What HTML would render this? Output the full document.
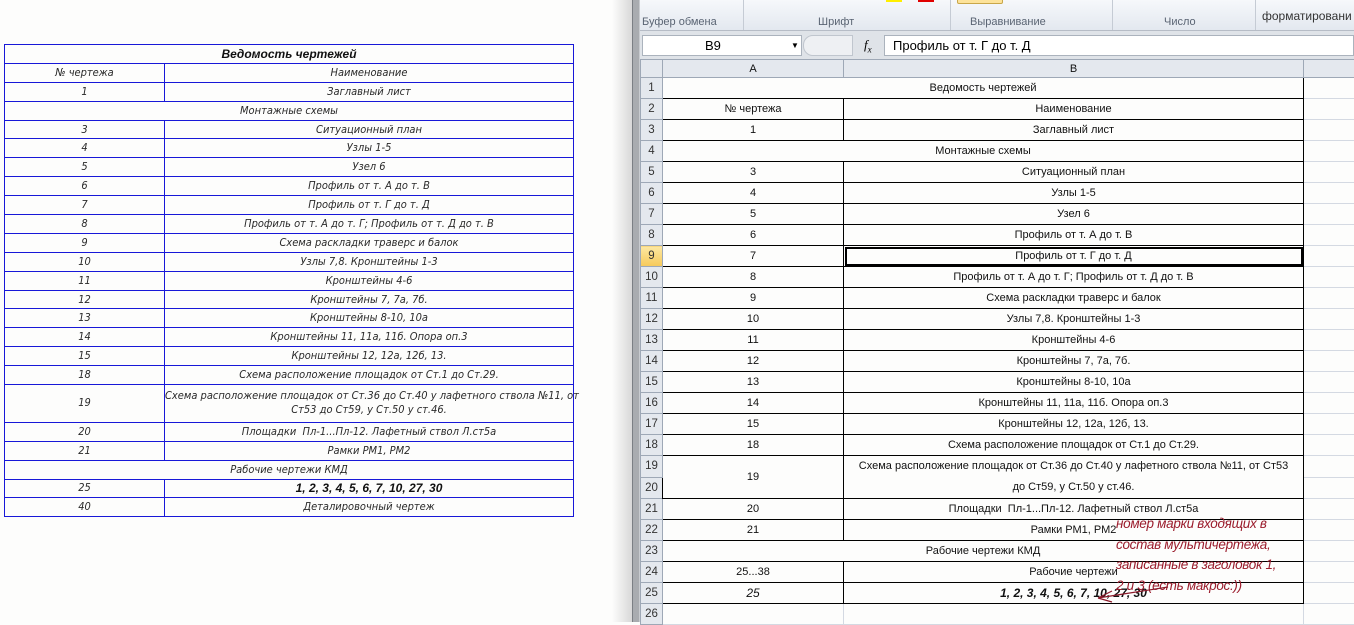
<!DOCTYPE html>
<html><head><meta charset="utf-8">
<style>
*{margin:0;padding:0;box-sizing:border-box}
body{width:1354px;height:622px;overflow:hidden;background:#fdfdfc;position:relative;font-family:"Liberation Sans",sans-serif}
.lt{position:absolute;left:4px;top:44px;width:569px;border-collapse:collapse;table-layout:fixed;font-family:"Liberation Sans Narrow","DejaVu Sans Condensed","Liberation Sans",sans-serif;font-style:italic;font-size:11px;color:#2a2a2a}
.lt td{border:1px solid #1818d8;height:18.9px;text-align:center;padding:0;line-height:12px;white-space:nowrap;overflow:visible}
.lt td.b{font-family:"Liberation Sans",sans-serif;font-weight:bold;font-size:12px;color:#111}
.shadow{position:absolute;left:612px;top:0;width:20px;height:622px;background:linear-gradient(to right,#fdfdfc,#d8d8d8)}
.frame{position:absolute;left:632px;top:0;width:8px;height:622px;background:#a9acb0;border-left:1px solid #7b7f84;border-right:1px solid #c8cbcf}
.rib{position:absolute;left:640px;top:0;width:714px;height:31px;background:linear-gradient(#f6f8fb,#e3e8ef);border-bottom:1px solid #b6bcc6;font-size:11px;color:#5a6473}
.rib span{position:absolute;top:16px}
.rib .sep{position:absolute;top:0;width:1px;height:30px;background:#c5cbd4}
.fb{position:absolute;left:640px;top:31px;width:714px;height:28px;background:#dfe3e8}
.nb{position:absolute;left:2px;top:4px;width:160px;height:21px;background:#fff;border:1px solid #abb3bd;font-size:13px;padding-left:62px;line-height:19px}
.fx{position:absolute;left:244px;top:4px;width:470px;height:21px;background:#fff;border:1px solid #abb3bd;font-size:13px;padding-left:8px;line-height:19px}
.grid{position:absolute;left:640px;top:59px}
.xt{width:714px;border-collapse:collapse;table-layout:fixed;font-size:11px;color:#111}
.xt td{height:21px;border:1px solid #d4d9e2;text-align:center;padding:0;white-space:nowrap;overflow:visible}
.xt td.h{background:#e4e8ee;color:#333;font-size:11.5px;border-color:#9ea8b6}
.xt tr.hd td{height:18px;background:#e4e8ee;border-color:#9ea8b6}
.xt td.k{border:1px solid #000}
.xt td.sel{background:linear-gradient(#fde8a2,#f6c95a);}
.note{position:absolute;left:1116px;top:514px;color:#9b1c2c;font-style:italic;font-size:13.5px;line-height:20.5px;width:190px;letter-spacing:-0.3px;white-space:nowrap}
</style></head><body>
<table class="lt">
<col style="width:160px"><col style="width:409px">
<tr><td colspan="2" class="b" style="font-style:italic">Ведомость чертежей</td></tr>
<tr><td>№ чертежа</td><td>Наименование</td></tr>
<tr><td>1</td><td>Заглавный лист</td></tr>
<tr><td colspan="2">Монтажные схемы</td></tr>
<tr><td>3</td><td>Ситуационный план</td></tr>
<tr><td>4</td><td>Узлы 1-5</td></tr>
<tr><td>5</td><td>Узел 6</td></tr>
<tr><td>6</td><td>Профиль от т. А до т. В</td></tr>
<tr><td>7</td><td>Профиль от т. Г до т. Д</td></tr>
<tr><td>8</td><td>Профиль от т. А до т. Г; Профиль от т. Д до т. В</td></tr>
<tr><td>9</td><td>Схема раскладки траверс и балок</td></tr>
<tr><td>10</td><td>Узлы 7,8. Кронштейны 1-3</td></tr>
<tr><td>11</td><td>Кронштейны 4-6</td></tr>
<tr><td>12</td><td>Кронштейны 7, 7а, 7б.</td></tr>
<tr><td>13</td><td>Кронштейны 8-10, 10а</td></tr>
<tr><td>14</td><td>Кронштейны 11, 11а, 11б. Опора оп.3</td></tr>
<tr><td>15</td><td>Кронштейны 12, 12а, 12б, 13.</td></tr>
<tr><td>18</td><td>Схема расположение площадок от Ст.1 до Ст.29.</td></tr>
<tr><td style="height:37.8px">19</td><td style="line-height:14px">Схема расположение площадок от Ст.36 до Ст.40 у лафетного ствола №11, от<br>Ст53 до Ст59, у Ст.50 у ст.46.</td></tr>
<tr><td>20</td><td>Площадки&nbsp; Пл-1...Пл-12. Лафетный ствол Л.ст5а</td></tr>
<tr><td>21</td><td>Рамки РМ1, РМ2</td></tr>
<tr><td colspan="2">Рабочие чертежи КМД</td></tr>
<tr><td>25</td><td class="b">1, 2, 3, 4, 5, 6, 7, 10, 27, 30</td></tr>
<tr><td>40</td><td>Деталировочный чертеж</td></tr>
</table>

<div class="shadow"></div>
<div class="frame"></div>
<div class="rib">
<span style="left:2px">Буфер обмена</span><div class="sep" style="left:103px"></div>
<span style="left:178px">Шрифт</span><div class="sep" style="left:310px"></div>
<span style="left:246px;top:-6px;width:16px;height:8px;background:#ffef00"></span>
<span style="left:278px;top:-6px;width:16px;height:8px;background:#e00000"></span>
<span style="left:317px;top:-6px;width:46px;height:10px;background:#fde39a;border:1px solid #c9a74a;border-radius:2px"></span>
<span style="left:330px">Выравнивание</span><div class="sep" style="left:472px"></div>
<span style="left:524px">Число</span><div class="sep" style="left:615px"></div>
<span style="left:622px;top:9px;color:#333;font-size:12px">форматировани</span>
</div>
<div class="fb">
<div class="nb">B9<span style="position:absolute;left:148px;top:0;font-size:8px">▼</span></div>
<div style="position:absolute;left:163px;top:4px;width:50px;height:21px;background:#eef0f3;border:1px solid #c0c6ce;border-radius:10px 0 0 10px"></div>
<div style="position:absolute;left:224px;top:6px;font-family:'Liberation Serif',serif;font-style:italic;font-size:13px">f<sub style="font-size:9px">x</sub></div>
<div class="fx">Профиль от т. Г до т. Д</div>
</div>

<div class="grid">
<table class="xt">
<col style="width:22px"><col style="width:181px"><col style="width:460px"><col style="width:51px">
<tr class="hd"><td></td><td>A</td><td class="sel">B</td><td></td></tr>
<tr><td class="h">1</td><td colspan="2" class="k">Ведомость чертежей</td><td></td></tr>
<tr><td class="h">2</td><td class="k">№ чертежа</td><td class="k">Наименование</td><td></td></tr>
<tr><td class="h">3</td><td class="k">1</td><td class="k">Заглавный лист</td><td></td></tr>
<tr><td class="h">4</td><td colspan="2" class="k">Монтажные схемы</td><td></td></tr>
<tr><td class="h">5</td><td class="k">3</td><td class="k">Ситуационный план</td><td></td></tr>
<tr><td class="h">6</td><td class="k">4</td><td class="k">Узлы 1-5</td><td></td></tr>
<tr><td class="h">7</td><td class="k">5</td><td class="k">Узел 6</td><td></td></tr>
<tr><td class="h">8</td><td class="k">6</td><td class="k">Профиль от т. А до т. В</td><td></td></tr>
<tr><td class="h sel">9</td><td class="k">7</td><td class="k" style="outline:2px solid #000;outline-offset:-3px">Профиль от т. Г до т. Д</td><td></td></tr>
<tr><td class="h">10</td><td class="k">8</td><td class="k">Профиль от т. А до т. Г; Профиль от т. Д до т. В</td><td></td></tr>
<tr><td class="h">11</td><td class="k">9</td><td class="k">Схема раскладки траверс и балок</td><td></td></tr>
<tr><td class="h">12</td><td class="k">10</td><td class="k">Узлы 7,8. Кронштейны 1-3</td><td></td></tr>
<tr><td class="h">13</td><td class="k">11</td><td class="k">Кронштейны 4-6</td><td></td></tr>
<tr><td class="h">14</td><td class="k">12</td><td class="k">Кронштейны 7, 7а, 7б.</td><td></td></tr>
<tr><td class="h">15</td><td class="k">13</td><td class="k">Кронштейны 8-10, 10а</td><td></td></tr>
<tr><td class="h">16</td><td class="k">14</td><td class="k">Кронштейны 11, 11а, 11б. Опора оп.3</td><td></td></tr>
<tr><td class="h">17</td><td class="k">15</td><td class="k">Кронштейны 12, 12а, 12б, 13.</td><td></td></tr>
<tr><td class="h">18</td><td class="k">18</td><td class="k">Схема расположение площадок от Ст.1 до Ст.29.</td><td></td></tr>
<tr><td class="h">19</td><td class="k" rowspan="2">19</td><td class="k" rowspan="2" style="line-height:21px">Схема расположение площадок от Ст.36 до Ст.40 у лафетного ствола №11, от Ст53<br>до Ст59, у Ст.50 у ст.46.</td><td></td></tr>
<tr><td class="h">20</td><td></td></tr>
<tr><td class="h">21</td><td class="k">20</td><td class="k">Площадки&nbsp; Пл-1...Пл-12. Лафетный ствол Л.ст5а</td><td></td></tr>
<tr><td class="h">22</td><td class="k">21</td><td class="k">Рамки РМ1, РМ2</td><td></td></tr>
<tr><td class="h">23</td><td colspan="2" class="k">Рабочие чертежи КМД</td><td></td></tr>
<tr><td class="h">24</td><td class="k">25...38</td><td class="k">Рабочие чертежи</td><td></td></tr>
<tr><td class="h">25</td><td class="k" style="font-style:italic;font-size:12px">25</td><td class="k" style="font-style:italic;font-weight:bold;font-size:12px">1, 2, 3, 4, 5, 6, 7, 10, 27, 30</td><td></td></tr>
<tr><td class="h">26</td><td></td><td></td><td></td></tr>
</table>
</div>
<div class="note">номер марки входящих в<br>состав мультичертежа,<br>записанные в заголовок 1,<br>2 и 3 (есть макрос:))</div>
<svg style="position:absolute;left:1090px;top:582px" width="90" height="22"><path d="M78 5 L8 16 M8 16 L22 9 M8 16 L22 20" stroke="#8b1a2a" stroke-width="1.2" fill="none"/></svg>
</body></html>
